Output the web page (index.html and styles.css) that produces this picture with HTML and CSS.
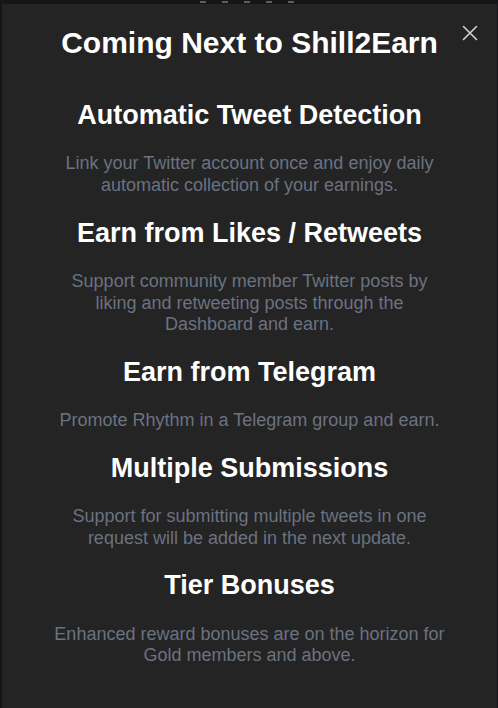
FILE: index.html
```html
<!DOCTYPE html>
<html lang="en">
<head>
<meta charset="utf-8">
<title>Coming Next to Shill2Earn</title>
<link rel="stylesheet" href="styles.css">
</head>
<body>
<div class="page-strip" aria-hidden="true"></div>
<div class="modal">
  <button class="close" aria-label="Close">
    <svg width="16" height="16" viewBox="0 0 16 16" aria-hidden="true">
      <path d="M1.5 1.5 L14.5 14.5 M14.5 1.5 L1.5 14.5" stroke="#cfd3d8" stroke-width="1.6" stroke-linecap="round" fill="none"/>
    </svg>
  </button>
  <h1 class="title">Coming Next to Shill2Earn</h1>
  <div class="features">
    <section class="feature">
      <h2 class="feature-title">Automatic Tweet Detection</h2>
      <p class="feature-text">Link your Twitter account once and enjoy daily automatic collection of your earnings.</p>
    </section>
    <section class="feature">
      <h2 class="feature-title">Earn from Likes / Retweets</h2>
      <p class="feature-text">Support community member Twitter posts by liking and retweeting posts through the Dashboard and earn.</p>
    </section>
    <section class="feature">
      <h2 class="feature-title">Earn from Telegram</h2>
      <p class="feature-text">Promote Rhythm in a Telegram group and earn.</p>
    </section>
    <section class="feature">
      <h2 class="feature-title">Multiple Submissions</h2>
      <p class="feature-text">Support for submitting multiple tweets in one request will be added in the next update.</p>
    </section>
    <section class="feature">
      <h2 class="feature-title">Tier Bonuses</h2>
      <p class="feature-text">Enhanced reward bonuses are on the horizon for Gold members and above.</p>
    </section>
  </div>
</div>
</body>
</html>
```
FILE: styles.css
```css
* { box-sizing: border-box; }
html, body {
  margin: 0;
  padding: 0;
  height: 100%;
  background: #16161a;
  font-family: "Liberation Sans", Arial, sans-serif;
  overflow: hidden;
}
.page-strip {
  height: 4px;
  margin: 0 auto;
  width: 110px;
  background:
    repeating-linear-gradient(90deg, transparent 0 6px, rgba(150,150,155,0.55) 6px 12px, transparent 12px 22px);
  background-size: 100% 2px;
  background-position: 0 1px;
  background-repeat: no-repeat;
}
.modal {
  position: relative;
  margin: 0 1px 0 2px;
  height: 704px;
  background: #242424;
  padding: 21px 47px 0;
  text-align: center;
}
.close {
  position: absolute;
  top: 21px;
  right: 19px;
  width: 16px;
  height: 16px;
  padding: 0;
  border: 0;
  background: transparent;
  display: flex;
  cursor: pointer;
}
.title {
  margin: 0 0 38px;
  font-size: 30px;
  line-height: 36px;
  font-weight: bold;
  color: #ffffff;
}
.features {
  display: flex;
  flex-direction: column;
  gap: 20px;
}
.feature {
  display: flex;
  flex-direction: column;
  gap: 22px;
}
.feature-title {
  margin: 0;
  font-size: 27px;
  line-height: 32.4px;
  font-weight: bold;
  color: #ffffff;
}
.feature-text {
  margin: 0;
  font-size: 18px;
  line-height: 21.6px;
  color: #6b7280;
}
```
